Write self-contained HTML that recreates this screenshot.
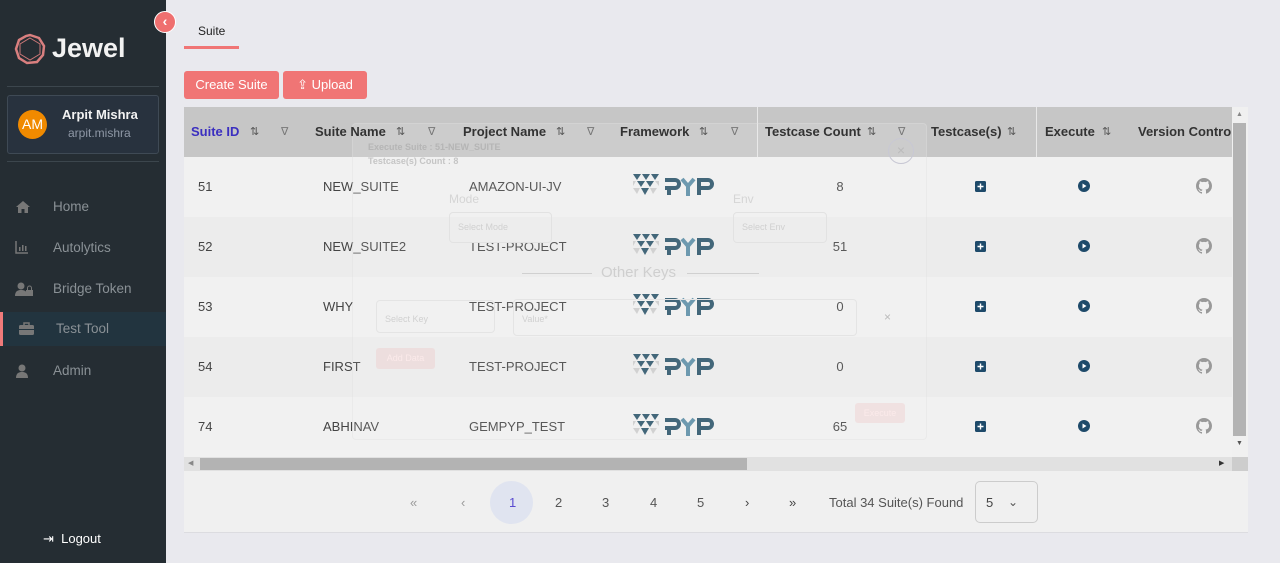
<!DOCTYPE html>
<html><head><meta charset="utf-8"><style>
*{box-sizing:border-box;margin:0;padding:0}
body{width:1280px;height:563px;overflow:hidden;background:#e9e9ee;font-family:"Liberation Sans",sans-serif;position:relative}
.sb{position:absolute;left:0;top:0;width:166px;height:563px;background:#252d33}
.abs{position:absolute}
.nav{position:absolute;left:0;width:166px;height:34px;color:#8a9196;font-size:13.5px;line-height:34px}
.nav span{position:absolute;left:53px}
.nav svg{position:absolute;left:15px;top:10px}
.hd{position:absolute;top:107px;height:50px;font-size:13px;font-weight:bold;color:#333;line-height:50px}
.row{position:absolute;left:184px;width:1048px;height:60px;font-size:13px;color:#444}
.row div{position:absolute;top:0;line-height:60px}
.sort{font-size:11px;color:#555;font-weight:normal}
.pg{position:absolute;top:495px;font-size:13px;color:#555}
</style></head><body>
<div class="sb">
 <svg class="abs" style="left:14px;top:33px" width="32" height="32" viewBox="0 0 32 32"><polygon points="16,2 25,5 30,13 29,22 23,29 13,30 5,25 2,16 5,7 12,3" fill="none" stroke="#d97f7f" stroke-width="2.5"/><polygon points="16,5 26,11 26,21 16,27 6,21 6,11" fill="none" stroke="#c77" stroke-width="1"/></svg>
 <div class="abs" style="left:52px;top:33px;font-size:27px;font-weight:bold;color:#f2f2f2">Jewel</div>
 <div class="abs" style="left:7px;top:86px;width:152px;height:1px;background:#3c464d"></div>
 <div class="abs" style="left:7px;top:95px;width:152px;height:59px;border:1px solid #3f4a55;border-radius:3px;background:#28323e"></div>
 <div class="abs" style="left:18px;top:110px;width:29px;height:29px;border-radius:50%;background:#f08a00;color:#fff;font-size:14px;line-height:29px;text-align:center">AM</div>
 <div class="abs" style="left:62px;top:107px;font-size:13px;font-weight:bold;color:#f2f2f2">Arpit Mishra</div>
 <div class="abs" style="left:68px;top:126px;font-size:12px;color:#8f98a6">arpit.mishra</div>
 <div class="abs" style="left:7px;top:161px;width:152px;height:1px;background:#3c464d"></div>
 <div class="nav" style="top:190px"><svg width="16" height="14" viewBox="0 0 16 14"><path d="M8 1 L1 7 H3 V13 H6.5 V9 H9.5 V13 H13 V7 H15Z" fill="#777"/></svg><span>Home</span></div>
 <div class="nav" style="top:231px"><svg width="14" height="13" viewBox="0 0 14 13"><path d="M1 0V12H13" stroke="#777" stroke-width="1.5" fill="none"/><rect x="4" y="6" width="1.5" height="4" fill="#777"/><rect x="7" y="4" width="1.5" height="6" fill="#777"/><rect x="10" y="5" width="1.5" height="5" fill="#777"/></svg><span>Autolytics</span></div>
 <div class="nav" style="top:272px"><svg width="18" height="14" viewBox="0 0 18 14"><circle cx="6" cy="4" r="3.5" fill="#777"/><path d="M0 14c0-5 3-6 6-6s5 1 5 2v4z" fill="#777"/><rect x="11" y="8" width="7" height="6" fill="#777"/><path d="M12.5 8V6a2 2 0 014 0v2" stroke="#777" fill="none"/></svg><span>Bridge Token</span></div>
 <div class="nav" style="top:312px;background:#22343f;height:34px"><div class="abs" style="left:0;top:0;width:3px;height:34px;background:#f07a7a"></div><svg width="15" height="13" viewBox="0 0 15 13" style="left:19px"><rect x="0" y="3" width="15" height="10" rx="1.5" fill="#777"/><path d="M5 3V1h5v2" stroke="#777" fill="none" stroke-width="1.5"/><rect x="0" y="7" width="15" height="1" fill="#22343f"/></svg><span style="left:56px">Test Tool</span></div>
 <div class="nav" style="top:354px"><svg width="14" height="14" viewBox="0 0 14 14"><circle cx="7" cy="4" r="3.5" fill="#777"/><path d="M1 14c0-5 3-6 6-6s6 1 6 6z" fill="#777"/></svg><span>Admin</span></div>
 <div class="abs" style="left:43px;top:531px;color:#fff;font-size:13px">⇥&nbsp;&nbsp;Logout</div>
</div>
<div class="abs" style="left:154px;top:11px;width:22px;height:22px;border-radius:50%;background:#ef6f6f;border:1.5px solid #fff;color:#fff;font-size:14px;font-weight:bold;line-height:18px;text-align:center">‹</div>
<div class="abs" style="left:198px;top:24px;font-size:12px;color:#222">Suite</div>
<div class="abs" style="left:184px;top:46px;width:55px;height:3px;background:#f07575"></div>
<div class="abs" style="left:184px;top:71px;width:95px;height:28px;background:#f07575;border-radius:3px;color:#fff;font-size:13px;line-height:28px;text-align:center">Create Suite</div>
<div class="abs" style="left:283px;top:71px;width:84px;height:28px;background:#f07575;border-radius:3px;color:#fff;font-size:13px;line-height:28px;text-align:center">⇪ Upload</div>
<!-- table -->
<div class="abs" style="left:184px;top:107px;width:1048px;height:50px;background:#c6c6c6"></div>
<div class="abs" style="left:757px;top:107px;width:1px;height:50px;background:#e8e8e8"></div>
<div class="abs" style="left:1036px;top:107px;width:1px;height:50px;background:#e8e8e8"></div>
<div id="rows"></div>
<script>
var d=[["51","NEW_SUITE","AMAZON-UI-JV","8"],["52","NEW_SUITE2","TEST-PROJECT","51"],["53","WHY","TEST-PROJECT","0"],["54","FIRST","TEST-PROJECT","0"],["74","ABHINAV","GEMPYP_TEST","65"]];
var h="";
d.forEach(function(r,i){var y=157+i*60;h+='<div class="row" style="top:'+y+'px;background:'+(i%2?'#ececec':'#f1f1f1')+'"><div style="left:14px">'+r[0]+'</div><div style="left:139px">'+r[1]+'</div><div style="left:285px">'+r[2]+'</div>'+
'<svg style="position:absolute;left:448px;top:17px" width="84" height="26" viewBox="0 0 84 26"><g fill="#2b5469"><polygon points="1,0 9,0 5,6"/><polygon points="10,0 18,0 14,6"/><polygon points="19,0 27,0 23,6"/><polygon points="5,7 13,7 9,13"/><polygon points="14,7 22,7 18,13"/><polygon points="9,14 17,14 13,21"/></g><g fill="#ccc"><polygon points="1,7 4,7 1,12"/><polygon points="23,7 27,7 27,12"/><polygon points="1,14 8,14 5,20"/><polygon points="18,14 25,14 21,20"/></g><path d="M33 6h10a4 4 0 010 8h-10M33 6v0M37 14v7" stroke="#2b5469" stroke-width="4" fill="none"/><path d="M50 5l6 7 6-7M56 12v10" stroke="#5a8da6" stroke-width="4" fill="none"/><path d="M67 21V6h9a4 4 0 010 8h-9" stroke="#2b5469" stroke-width="4" fill="none"/></svg>'+
'<div style="left:656px;width:30px;text-align:center;transform:translateX(-15px)">'+r[3]+'</div>'+
'<svg style="position:absolute;left:791px;top:24px" width="11" height="11"><rect width="11" height="11" rx="1.5" fill="#1e4a6a"/><path d="M5.5 2.5v6M2.5 5.5h6" stroke="#fff" stroke-width="1.4"/></svg>'+
'<svg style="position:absolute;left:894px;top:23px" width="12" height="12"><circle cx="6" cy="6" r="6" fill="#1e4a6a"/><path d="M4.5 3.5v5l4-2.5z" fill="#fff"/></svg>'+
'<svg style="position:absolute;left:1012px;top:21px" width="16" height="16" viewBox="0 0 16 16"><path fill="#999" d="M8 0C3.58 0 0 3.58 0 8c0 3.540 2.29 6.53 5.47 7.59.4.07.55-.17.55-.38v-1.330c-2.23.48-2.7-1.07-2.7-1.07-.36-.92-.89-1.17-.89-1.17-.73-.5.05-.49.05-.49.8.06 1.23.83 1.23.83.71 1.22 1.87.87 2.33.66.07-.52.28-.87.51-1.070-1.78-.2-3.64-.89-3.64-3.95 0-.87.31-1.59.82-2.15-.08-.2-.36-1.02.08-2.12 0 0 .67-.21 2.2.82A7.6 7.6 0 018 3.86c.68 0 1.36.09 2 .27 1.53-1.04 2.2-.82 2.2-.82.44 1.1.16 1.92.08 2.12.51.56.82 1.27.82 2.15 0 3.07-1.87 3.75-3.65 3.95.29.25.54.73.54 1.48v2.2c0 .21.15.46.55.38A8 8 0 0016 8c0-4.42-3.58-8-8-8z"/></svg></div>';});
document.getElementById("rows").innerHTML=h;
</script>
<!-- faded modal -->
<div class="abs" style="left:352px;top:123px;width:575px;height:317px;background:rgba(245,245,245,0.12);border:1px solid rgba(220,220,220,0.4);border-radius:4px"></div>
<div class="abs" style="left:368px;top:142px;font-size:9px;font-weight:bold;color:#b5b5b5">Execute Suite : 51-NEW_SUITE</div>
<div class="abs" style="left:368px;top:156px;font-size:9px;font-weight:bold;color:#c5c5c5">Testcase(s) Count : 8</div>
<div class="abs" style="left:888px;top:138px;width:26px;height:26px;border-radius:50%;border:1.5px solid #c8c8d4;color:#bbb;text-align:center;line-height:23px;font-size:14px">×</div>
<div class="abs" style="left:449px;top:192px;font-size:12px;color:#d5d5d5">Mode</div>
<div class="abs" style="left:449px;top:212px;width:103px;height:31px;border:1px solid #e2e2e2;border-radius:4px;font-size:9px;color:#d0d0d0;line-height:29px;padding-left:8px">Select Mode</div>
<div class="abs" style="left:733px;top:192px;font-size:12px;color:#d5d5d5">Env</div>
<div class="abs" style="left:733px;top:212px;width:94px;height:31px;border:1px solid #e2e2e2;border-radius:4px;font-size:9px;color:#d0d0d0;line-height:29px;padding-left:8px">Select Env</div>
<div class="abs" style="left:522px;top:273px;width:70px;height:1px;background:#d0d0d0"></div>
<div class="abs" style="left:601px;top:264px;font-size:15px;color:#cfcfcf">Other Keys</div>
<div class="abs" style="left:687px;top:273px;width:72px;height:1px;background:#d0d0d0"></div>
<div class="abs" style="left:376px;top:300px;width:119px;height:33px;border:1px solid #e4e4e4;border-radius:4px;font-size:9px;color:#d0d0d0;line-height:36px;padding-left:8px">Select Key</div>
<div class="abs" style="left:513px;top:299px;width:344px;height:37px;border:1px solid #e4e4e4;border-radius:4px;font-size:9px;color:#d0d0d0;line-height:38px;padding-left:8px">Value*</div>
<div class="abs" style="left:884px;top:310px;font-size:12px;color:#bbb">×</div>
<div class="abs" style="left:376px;top:348px;width:59px;height:21px;background:rgba(240,117,117,0.12);border-radius:3px;font-size:9px;color:#fbeaea;line-height:21px;text-align:center">Add Data</div>
<div class="abs" style="left:855px;top:403px;width:50px;height:20px;background:rgba(240,117,117,0.12);border-radius:3px;font-size:9px;color:#fbeaea;line-height:20px;text-align:center">Execute</div>
<!-- header text above modal -->
<div class="hd" style="left:191px;color:#3b2fc0">Suite ID</div><div class="hd sort" style="left:250px">⇅</div><div class="hd sort" style="left:281px;color:#777">∇</div>
<div class="hd" style="left:315px">Suite Name</div><div class="hd sort" style="left:396px">⇅</div><div class="hd sort" style="left:428px;color:#777">∇</div>
<div class="hd" style="left:463px">Project Name</div><div class="hd sort" style="left:556px">⇅</div><div class="hd sort" style="left:587px;color:#777">∇</div>
<div class="hd" style="left:620px">Framework</div><div class="hd sort" style="left:699px">⇅</div><div class="hd sort" style="left:731px;color:#777">∇</div>
<div class="hd" style="left:765px">Testcase Count</div><div class="hd sort" style="left:867px">⇅</div><div class="hd sort" style="left:898px;color:#777">∇</div>
<div class="hd" style="left:931px">Testcase(s)</div><div class="hd sort" style="left:1007px">⇅</div>
<div class="hd" style="left:1045px">Execute</div><div class="hd sort" style="left:1102px">⇅</div>
<div class="hd" style="left:1138px;width:94px;overflow:hidden;white-space:nowrap">Version Control</div>
<!-- scrollbars -->
<div class="abs" style="left:1232px;top:107px;width:16px;height:350px;background:#f0f0f0"></div>
<div class="abs" style="left:1233px;top:123px;width:13px;height:313px;background:#b3b3b3"></div>
<div class="abs" style="left:1236px;top:111px;font-size:7px;color:#888">▲</div>
<div class="abs" style="left:1236px;top:440px;font-size:7px;color:#555">▼</div>
<div class="abs" style="left:184px;top:457px;width:1048px;height:14px;background:#e1e1e1"></div>
<div class="abs" style="left:1232px;top:457px;width:16px;height:14px;background:#cdcdcd"></div>
<div class="abs" style="left:200px;top:458px;width:547px;height:12px;background:#b3b3b3"></div>
<div class="abs" style="left:188px;top:459px;font-size:7px;color:#888">◀</div>
<div class="abs" style="left:1219px;top:459px;font-size:7px;color:#333">▶</div>
<!-- pagination -->
<div class="abs" style="left:184px;top:471px;width:1064px;height:62px;background:#f0f0f0;border-bottom:1px solid #dcdce0"></div>
<div class="pg" style="left:410px;color:#999">«</div>
<div class="pg" style="left:461px;color:#999">‹</div>
<div class="abs" style="left:490px;top:481px;width:43px;height:43px;border-radius:50%;background:#e0e4f0"></div>
<div class="pg" style="left:509px;color:#5a4bd0">1</div>
<div class="pg" style="left:555px">2</div>
<div class="pg" style="left:602px">3</div>
<div class="pg" style="left:650px">4</div>
<div class="pg" style="left:697px">5</div>
<div class="pg" style="left:745px;color:#444">›</div>
<div class="pg" style="left:789px;color:#444">»</div>
<div class="pg" style="left:829px">Total 34 Suite(s) Found</div>
<div class="abs" style="left:975px;top:481px;width:63px;height:42px;border:1px solid #ccc;border-radius:5px;background:#f0f0f0"></div>
<div class="pg" style="left:986px;color:#444">5</div>
<div class="pg" style="left:1008px;color:#555;font-size:12px">⌄</div>
</body></html>
